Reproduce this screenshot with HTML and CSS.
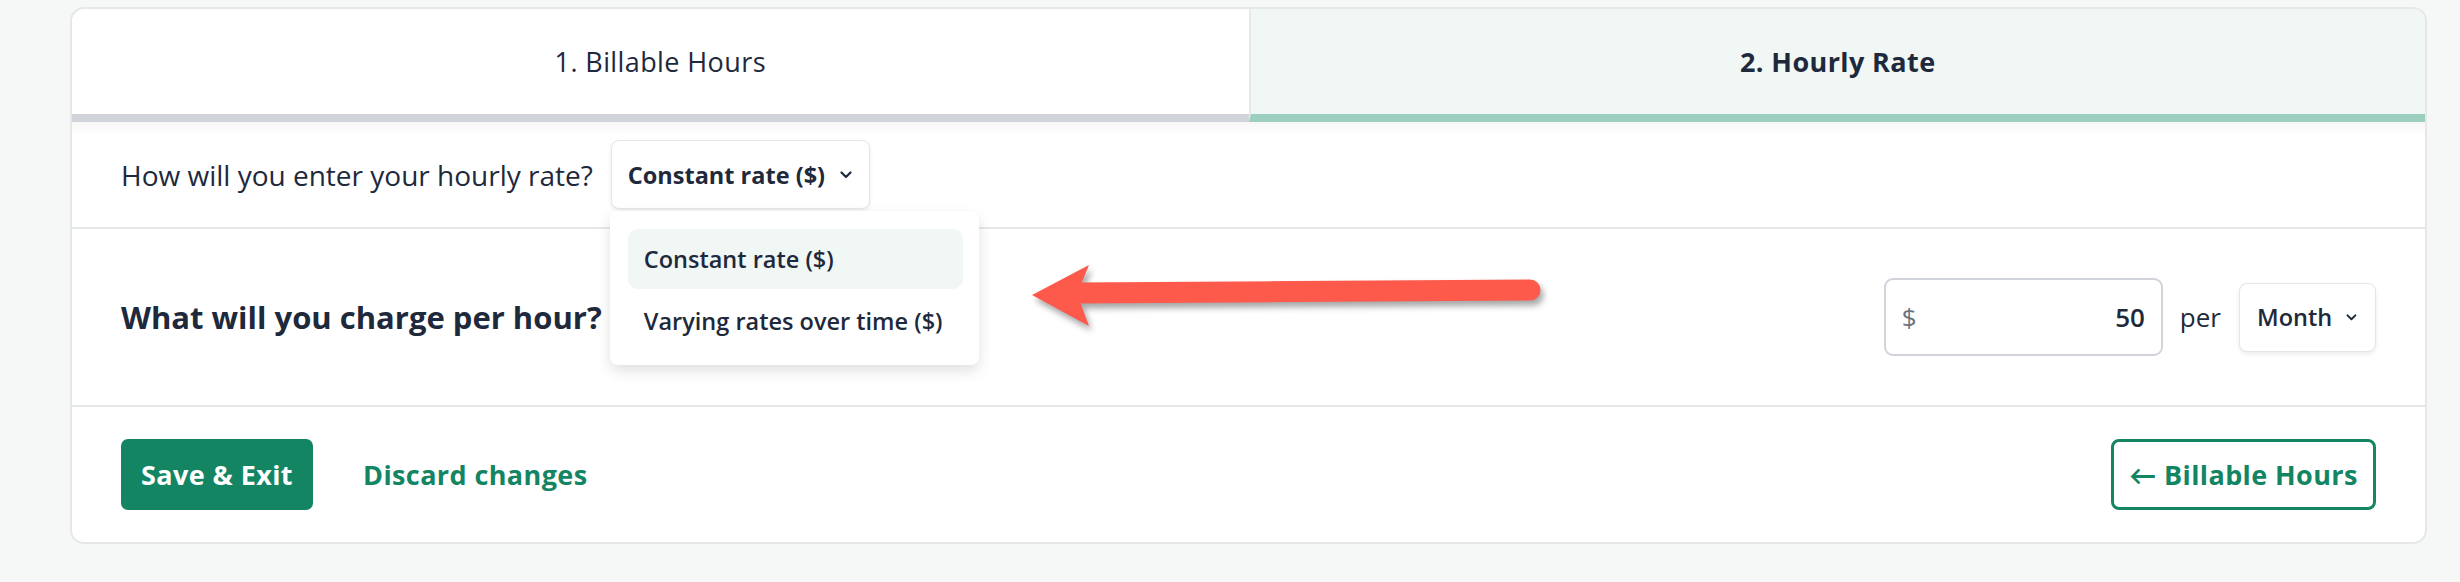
FILE: index.html
```html
<!DOCTYPE html>
<html lang="en">
<head>
    <meta charset="UTF-8">
    <title>Hourly Rate</title>
    <link rel="stylesheet" href="styles.css">
</head>
<body>

<div class="card">
    <div class="tabs">
        <div class="tab">1. Billable Hours</div>
        <div class="tab active">2. Hourly Rate</div>
    </div>

    <div class="row row-mode">
        <span class="question">How will you enter your hourly rate?</span>
        <div class="select-wrap">
            <button class="select">Constant rate ($)
                <svg class="chev" viewBox="0 0 12 8" width="12" height="8"><path d="M1.5 1.5 L6 6 L10.5 1.5" fill="none" stroke="currentColor" stroke-width="2.2" stroke-linecap="round" stroke-linejoin="round"/></svg>
            </button>
            <div class="menu">
                <div class="menu-item selected">Constant rate ($)</div>
                <div class="menu-item">Varying rates over time ($)</div>
            </div>
        </div>
    </div>

    <div class="row row-rate">
        <span class="big-question">What will you charge per hour?</span>
        <div class="rate-controls">
            <div class="money-input">
                <span class="currency">$</span>
                <span class="amount">50</span>
            </div>
            <span class="per">per</span>
            <button class="select small">Month
                <svg class="chev" viewBox="0 0 12 8" width="11" height="7"><path d="M1.5 1.5 L6 6 L10.5 1.5" fill="none" stroke="currentColor" stroke-width="2.2" stroke-linecap="round" stroke-linejoin="round"/></svg>
            </button>
        </div>
    </div>

    <div class="row row-actions">
        <div class="left-actions">
            <button class="btn-primary">Save &amp; Exit</button>
            <a class="link" href="#">Discard changes</a>
        </div>
        <button class="btn-outline">&larr; Billable Hours</button>
    </div>
</div>

<!-- annotation arrow drawn over the screenshot -->
<svg class="annotation" width="540" height="90" viewBox="0 0 540 90">
    <path d="M55 43 L510 40" stroke="#fd5a4c" stroke-width="21" stroke-linecap="round" fill="none"/>
    <path d="M12 45 L69 15 L57 44 L69 76 Z" fill="#fd5a4c"/>
</svg>

</body>
</html>
```

FILE: styles.css
```css
body {
    margin: 0;
    padding: 7px 33px 0 70px;
    background-color: #f6f8f7;
    font-family: "Open Sans", "Lato", sans-serif;
    color: #1e293b;
}
.card {
    width: 2357px;
    box-sizing: border-box;
    background: #fff;
    border: 2px solid #e6e8e8;
    border-radius: 14px;
}
.tabs {
    display: grid;
    grid-template-columns: 1fr 1fr;
}
.tab {
    height: 105px;
    display: flex;
    align-items: center;
    justify-content: center;
    font-size: 27px;
    letter-spacing: 0.4px;
    border-bottom: 8px solid #d1d5db;
    border-top-left-radius: 12px;
}
.tab.active {
    background: #f0f7f4;
    font-weight: 700;
    border-bottom-color: #9ccfc0;
    border-left: 2px solid #e6e8e8;
    border-top-left-radius: 0;
    border-top-right-radius: 12px;
}
.row {
    display: flex;
    align-items: center;
    padding: 0 49px;
    border-bottom: 2px solid #e6e8e8;
}
.row-mode {
    height: 105px;
    gap: 18px;
    background: linear-gradient(#f7f7f7, #fff 14px);
}
.question {
    font-size: 28px;
}
.select-wrap {
    position: relative;
}
.select {
    display: flex;
    align-items: center;
    gap: 15px;
    height: 69px;
    padding: 0 17px 0 16px;
    background: #fff;
    border: 1px solid #e3e5e8;
    border-radius: 8px;
    box-shadow: 0 2px 4px rgba(0,0,0,0.08);
    font-family: inherit;
    font-size: 23.5px;
    font-weight: 700;
    color: #1e293b;
}
.chev {
    color: #1e293b;
}
.menu {
    position: absolute;
    top: 71px;
    left: -1px;
    width: 369px;
    box-sizing: border-box;
    padding: 18px 16px 14px 18px;
    background: #fff;
    border-radius: 8px;
    box-shadow: 0 6px 14px rgba(0,0,0,0.12);
    z-index: 2;
}
.menu-item {
    height: 60px;
    display: flex;
    align-items: center;
    padding: 0 16px;
    border-radius: 10px;
    font-size: 23.5px;
    font-weight: 600;
    white-space: nowrap;
}
.menu-item.selected {
    background: #f0f7f4;
    margin-bottom: 2px;
}
.row-rate {
    height: 176px;
    justify-content: space-between;
}
.big-question {
    font-size: 31px;
    font-weight: 700;
}
.rate-controls {
    display: flex;
    align-items: center;
    gap: 17px;
}
.money-input {
    width: 279px;
    height: 78px;
    box-sizing: border-box;
    display: flex;
    align-items: center;
    justify-content: space-between;
    padding: 0 16px 0 16px;
    border: 2px solid #d1d5db;
    border-radius: 9px;
    font-size: 26px;
}
.currency {
    color: #6b7280;
}
.amount {
    font-weight: 600;
}
.per {
    font-size: 26px;
    margin-right: 1px;
}
.select.small {
    height: 69px;
    width: 137px;
    padding: 0 18px 0 17px;
    gap: 14px;
    font-weight: 600;
}
.row-actions {
    height: 135px;
    justify-content: space-between;
    border-bottom: none;
}
.left-actions {
    display: flex;
    align-items: center;
    gap: 50px;
}
.btn-primary {
    width: 192px;
    height: 71px;
    background: #148562;
    color: #fff;
    border: none;
    border-radius: 7px;
    font-family: inherit;
    font-size: 27px;
    letter-spacing: 0.4px;
    font-weight: 700;
}
.link {
    color: #148562;
    text-decoration: none;
    font-size: 27px;
    letter-spacing: 0.4px;
    font-weight: 700;
}
.btn-outline {
    width: 265px;
    height: 71px;
    background: #fff;
    color: #148562;
    border: 3px solid #148562;
    border-radius: 8px;
    font-family: inherit;
    font-size: 27px;
    letter-spacing: 0.4px;
    font-weight: 700;
}
.annotation {
    position: absolute;
    left: 1020px;
    top: 250px;
    filter: drop-shadow(3px 5px 3px rgba(0,0,0,0.35));
}
```
